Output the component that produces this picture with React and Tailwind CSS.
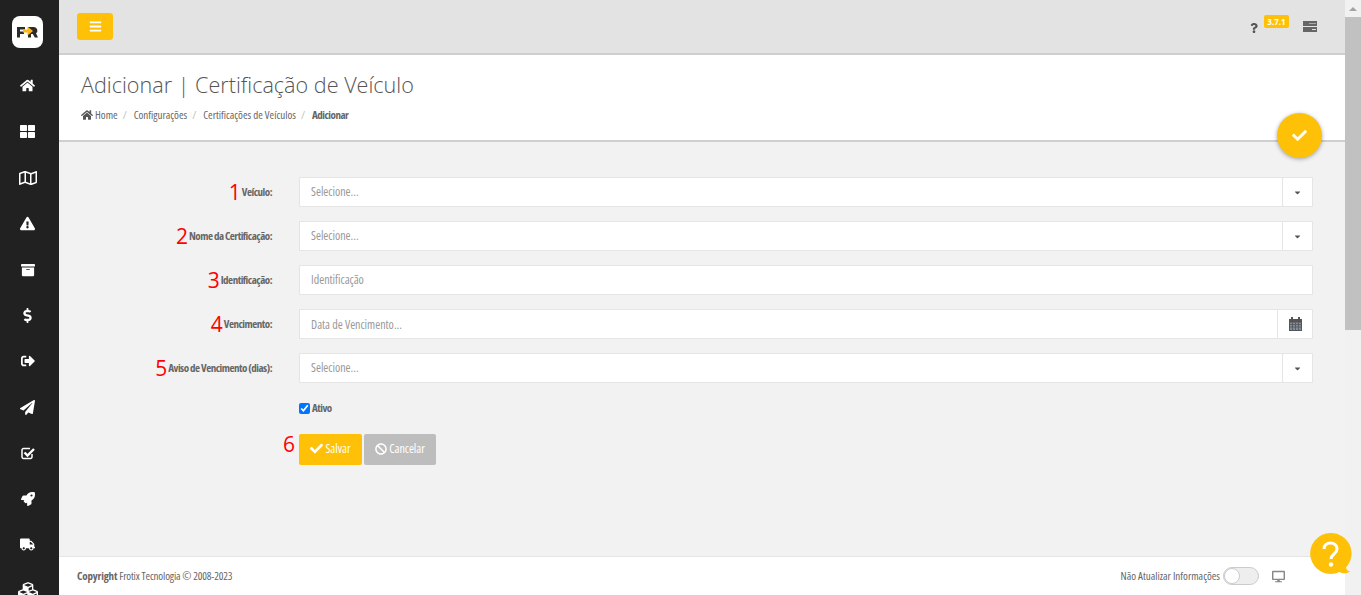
import React from "react";
import {
  FaHome, FaThLarge, FaRegMap, FaExclamationTriangle, FaArchive, FaDollarSign, FaSignOutAlt,
  FaPaperPlane, FaRocket, FaTruck, FaCubes, FaBars, FaQuestion,
  FaCheck, FaBan, FaDesktop, FaCaretDown,
} from "react-icons/fa";

const font = { fontFamily: "'Open Sans', sans-serif" };

function CheckSq({ size }) {
  return (
    <svg width={size} height={size} viewBox="0 0 14 14" fill="none">
      <path d="M11 8v3a1.5 1.5 0 0 1-1.500 1.500H2.500A1.500 1.500 0 0 1 1 11V4a1.500 1.500 0 0 1 1.500-1.500H9" stroke="currentColor" strokeWidth="1.500" />
      <path d="M3.500 6.500 6.500 9.500 13 3" stroke="currentColor" strokeWidth="2.400" />
    </svg>
  );
}

const navIcons = [
  [FaHome, 15], [FaThLarge, 15], [FaRegMap, 18], [FaExclamationTriangle, 15], [FaArchive, 14], [FaDollarSign, 15],
  [FaSignOutAlt, 14], [FaPaperPlane, 15], [CheckSq, 14], [FaRocket, 14], [FaTruck, 15], [FaCubes, 20],
];

function Label({ n, children, shift }) {
  return (
    <div className={"w-[213px] shrink-0 flex items-center justify-end text-[11px] font-bold text-[#666] [font-stretch:75%] tracking-[-0.5px] " + (shift ? "pt-[0px]" : "")}>
      <span className="text-[21px] leading-none font-normal text-[#f00] mr-[1px] tracking-normal [font-stretch:100%]">{n}</span>
      <span>{children}</span>
    </div>
  );
}

function Field({ n, label, placeholder, addon }) {
  return (
    <div className="flex h-[30px] gap-[27px]">
      <Label n={n}>{label}</Label>
      <div className="flex-1 flex bg-white border border-[#e5e5e5]">
        <div className={"flex-1 pl-[11px] flex items-center text-[12px] text-[#999] [font-stretch:75%] " + (addon === "cal" ? "pt-[2px]" : "")}>{placeholder}</div>
        {addon === "cal" ? (
          <div className="w-[35px] border-l border-[#e5e5e5] flex items-center justify-center">
            <svg width="13" height="14" viewBox="0 0 13 14">
              <path d="M2 0h2v2h5V0h2v2h2v3H0V2h2z" fill="#555" />
              <rect x="0.500" y="5" width="12" height="8.500" fill="#7f8ea3" stroke="#555" />
              <path d="M0 7.500h13M0 10h13M3.500 5v9M6.500 5v9M9.500 5v9" stroke="#555" strokeWidth="0.800" />
            </svg>
          </div>
        ) : addon === "caret" ? (
          <div className="w-[30px] border-l border-[#e5e5e5] flex items-center justify-center text-[#555]">
            <FaCaretDown size={9} />
          </div>
        ) : null}
      </div>
    </div>
  );
}

export default function App() {
  return (
    <div className="relative flex h-[595px] w-[1361px] overflow-hidden bg-[#f2f2f2]" style={font}>
      <aside className="w-[59px] shrink-0 bg-[#212121] flex flex-col items-center overflow-hidden pr-[4px]">
        <div className="shrink-0 mt-4 mb-[15px] w-[31px] h-8 bg-white rounded-[8px] flex items-center justify-center">
          <svg width="21" height="12" viewBox="0 0 21 12">
            <path d="M0 1h8v2.500H3v2h4V8H3v3.500H0z" fill="#2b2b2b" />
            <path d="M11 1h6a3.500 3.500 0 0 1 2 6.300L21 11.500h-3.200l-2-3.500H14v3.500h-3z" fill="#2b2b2b" />
            <path d="M6 3.500h4.500V0.500L16 5l-5.500 4.500V6.500H6z" fill="#fdb913" />
          </svg>
        </div>
        <div className="flex flex-col shrink-0">
          {navIcons.map(([I, s], i) => (
            <div key={i} className="h-[45.9px] flex items-center justify-center text-white"><I size={s} /></div>
          ))}
        </div>
      </aside>

      <div className="flex-1 flex flex-col min-w-0">
        <header className="h-[55px] shrink-0 bg-[#e3e3e3] border-b-2 border-[#cfcfcf] flex items-center pl-[18px] pr-[28px]">
          <button className="w-9 h-[27px] mb-[1px] bg-[#ffc107] rounded-[3px] flex items-center justify-center text-white"><FaBars size={13} /></button>
          <div className="ml-auto flex items-center text-[#555]">
            <FaQuestion size={10} className="mt-[2px]" />
            <span className="ml-[5px] mb-[10px] h-[13px] w-[25px] rounded-[2px] bg-[#ffc107] text-white text-[8px] font-bold leading-[13px] text-center">3.7.1</span>
            <svg width="14" height="11" viewBox="0 0 14 11" className="ml-[14px]">
              <rect y="0" width="14" height="5" fill="#666" />
              <rect y="6" width="14" height="5" fill="#666" />
              <rect x="6" y="2" width="7" height="1" fill="#aaa" />
              <rect x="9" y="8" width="4" height="1" fill="#ddd" />
            </svg>
          </div>
        </header>

        <section className="h-[87px] shrink-0 bg-white border-b-2 border-[#cfcfcf] pl-[22px] pt-[15px]">
          <h1 className="text-[21.600px] leading-[30px] font-light text-[#555]">Adicionar | Certificação de Veículo</h1>
          <nav className="mt-[7px] flex items-center text-[11px] leading-4 text-[#666] [font-stretch:75%]">
            <FaHome size={12} className="text-[#555] mr-[2px]" />
            <span>Home</span><span className="ml-[5px] mr-[7px] text-[#bbb]">/</span>
            <span>Configurações</span><span className="ml-[5px] mr-[7px] text-[#bbb]">/</span>
            <span>Certificações de Veículos</span><span className="ml-[5px] mr-[7px] text-[#bbb]">/</span>
            <span className="font-bold text-[#666] tracking-[-0.5px]">Adicionar</span>
          </nav>
        </section>

        <main className="flex-1 pt-[35px] pr-[32px] flex flex-col gap-[14px]">
          <Field n="1" label="Veículo:" placeholder="Selecione..." addon="caret" />
          <Field n="2" label="Nome da Certificação:" placeholder="Selecione..." addon="caret" />
          <Field n="3" label="Identificação:" placeholder="Identificação" />
          <Field n="4" label="Vencimento:" placeholder="Data de Vencimento..." addon="cal" />
          <Field n="5" label="Aviso de Vencimento (dias):" placeholder="Selecione..." addon="caret" />
          <div className="flex gap-[27px] h-[12px] mt-[5px]">
            <div className="w-[213px] shrink-0" />
            <label className="flex items-center text-[11px] font-bold text-[#666] [font-stretch:75%] tracking-[-0.5px]">
              <input type="checkbox" defaultChecked className="m-0 mr-[2px] w-[11px] h-[11px] accent-[#0075ff]" />Ativo
            </label>
          </div>
          <div className="flex gap-[27px] mt-[6px]">
            <div className="w-[213px] shrink-0 flex justify-end">
              <span className="text-[21px] leading-[20px] h-[31px] text-[#f00] -mr-[23px]">6</span>
            </div>
            <div className="flex gap-[2px] h-[31px] text-[12px] text-white [font-stretch:75%]">
              <button className="w-[63px] bg-[#ffc107] rounded-[2px] flex items-center justify-center gap-[2px] pb-[2px]"><FaCheck size={13} />Salvar</button>
              <button className="w-[72px] bg-[#bdbdbd] rounded-[2px] flex items-center justify-center gap-[2px] pb-[2px]"><FaBan size={12} />Cancelar</button>
            </div>
          </div>
        </main>

        <footer className="h-[39px] shrink-0 bg-white border-t border-[#e5e5e5] flex items-center pl-[18px] pr-[60px] text-[11px] text-[#666] [font-stretch:75%]">
          <span className="pt-[1px] tracking-[-0.15px]"><b className="font-bold">Copyright</b> Frotix Tecnologia © 2008-2023</span>
          <span className="ml-auto pt-[1px]">Não Atualizar Informações</span>
          <span className="ml-[3px] w-9 h-[18px] rounded-full border border-[#ccc] bg-[#eee] flex">
            <span className="w-4 h-4 rounded-full bg-white border border-[#ccc]" />
          </span>
          <FaDesktop size={13} className="ml-[13px] text-[#888]" />
        </footer>
      </div>

      <div className="w-4 shrink-0 bg-[#f1f1f1] flex flex-col items-center">
        <div className="h-[17px] w-full flex items-center justify-center">
          <div className="w-0 h-0 border-x-[4px] border-x-transparent border-b-[4px] border-b-[#a3a3a3]" />
        </div>
        <div className="w-full h-[313px] bg-[#c1c1c1]" />
      </div>

      <div className="absolute left-[1277px] top-[113px] w-[45px] h-[45px] rounded-full bg-[#ffc107] shadow-[0_1px_4px_rgba(0,0,0,0.35)] flex items-center justify-center text-white">
        <FaCheck size={15} />
      </div>
      <svg className="absolute left-[1310px] top-[533px]" width="42" height="43" viewBox="0 0 42 43">
        <path d="M20.500 0a20.500 20.500 0 1 0 9 39c3 1.500 7 2 10.500-.500-2-.500-3.500-1.500-4-4A20.500 20.500 0 0 0 20.500 0z" fill="#ffc107" />
        <path d="M14 16c0-8 13-8 13 0 0 5-6 5-6 10" stroke="#fff" strokeWidth="3" fill="none" />
        <circle cx="21" cy="31.500" r="2.200" fill="#fff" />
      </svg>
    </div>
  );
}
